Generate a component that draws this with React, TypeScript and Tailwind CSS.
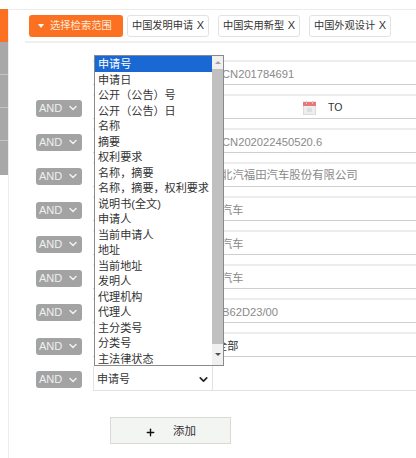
import React from 'react';
import { ChevronDown, Plus } from 'lucide-react';

const FONT = "font-['Liberation_Sans','Noto_Sans_CJK_SC',sans-serif]";

const options = [
  '申请号', '申请日', '公开（公告）号', '公开（公告）日', '名称', '摘要', '权利要求',
  '名称，摘要', '名称，摘要，权利要求', '说明书(全文)', '申请人', '当前申请人', '地址',
  '当前地址', '发明人', '代理机构', '代理人', '主分类号', '分类号', '主法律状态',
];

const rows = [
  { value: 'CN201784691', hasAnd: false, cls: '' },
  { value: '', hasAnd: true, date: true, cls: '' },
  { value: 'CN202022450520.6', hasAnd: true, cls: '' },
  { value: '北汽福田汽车股份有限公司', hasAnd: true, cls: 'ml-[-1px] text-[11.4px]' },
  { value: '汽车', hasAnd: true, cls: 'ml-[-1px]' },
  { value: '汽车', hasAnd: true, cls: 'ml-[-1px]' },
  { value: '汽车', hasAnd: true, cls: 'ml-[-1px]' },
  { value: 'B62D23/00', hasAnd: true, cls: '' },
  { value: '全部', hasAnd: true, cls: 'ml-[-6px] text-[#333]' },
];

const Chip = ({ label }: { label: string }) => (
  <div className="flex h-[22px] w-[82px] items-center justify-between rounded-[3px] border border-[#e2e2e2] bg-white px-[4px] text-[10.2px] text-[#333]">
    <span>{label}</span>
    <span className="text-[11px]">X</span>
  </div>
);

const AndPill = () => (
  <div className="flex h-[17px] w-[46px] items-center justify-between rounded-[3px] bg-[#a3a3a3] pl-[3px] pr-[3px] text-[11px] text-[#f0f0f0]">
    <span>AND</span>
    <ChevronDown size={12} strokeWidth={3} />
  </div>
);

const CalendarIcon = () => (
  <svg width="13" height="14" viewBox="0 0 13 14">
    <rect x="0.5" y="1" width="12" height="12.5" fill="#eeeeee" stroke="#dcdcdc" />
    <rect x="0" y="1" width="13" height="4" fill="#e8777a" />
    <rect x="3" y="0" width="1" height="3" fill="#c9c9c9" />
    <rect x="9" y="0" width="1" height="3" fill="#c9c9c9" />
    <rect x="4" y="7" width="5" height="4" fill="#dedede" />
  </svg>
);

const Dropdown = () => (
  <div className="absolute left-[94px] top-[55px] flex h-[311px] w-[130px] overflow-hidden border border-[#8a8a8a] bg-white text-[11.1px] text-[#333]">
    <div className="flex-1 overflow-hidden">
      {options.map((opt, i) => (
        <div
          key={opt}
          className={`h-[15.5px] whitespace-nowrap pl-[3px] leading-[17px] ${i === 0 ? 'bg-[#1a68d4] text-white' : ''}`}
        >
          {opt}
        </div>
      ))}
    </div>
    <div className="flex w-[11px] flex-col bg-[#f0f0f0]">
      <div className="flex h-[13px] items-center justify-center">
        <div className="h-0 w-0 border-x-[3px] border-b-[3px] border-x-transparent border-b-[#a0a0a0]" />
      </div>
      <div className="h-[275px] bg-[#c0c0c0]" />
      <div className="flex flex-1 items-center justify-center">
        <div className="h-0 w-0 border-x-[3px] border-t-[3px] border-x-transparent border-t-[#505050]" />
      </div>
    </div>
  </div>
);

export default function App() {
  return (
    <div className={`relative h-[458px] w-[416px] overflow-hidden bg-white ${FONT}`}>
      <div className="flex h-full pt-[9px]">
        {/* left rail */}
        <div className="flex w-[8px] shrink-0 flex-col">
          <div className="h-[33px] bg-[#fb7021]" />
          <div className="h-[33px] border-b border-[#c4c4c4] bg-[#a8a8a8]" />
          <div className="h-[33px] border-b border-[#c4c4c4] bg-[#a8a8a8]" />
          <div className="h-[33px] border-b border-[#c4c4c4] bg-[#a8a8a8]" />
          <div className="h-[34px] bg-[#a8a8a8]" />
        </div>

        {/* main panel */}
        <div className="flex-1 border-l border-t border-[#ececec]">
          <div className="ml-[16px] flex h-[33px] items-center gap-[9px] border-b-2 border-[#efefef] pl-[4px] pb-[1px] pt-[1px]">
            <div className="mr-[-5px] flex h-[22px] w-[94px] shrink-0 items-center rounded-[3px] bg-[#fb7021] pl-[9px] text-[10.3px] text-[#ffe9d8]">
              <div className="mr-[6px] h-0 w-0 border-x-[3px] border-t-[4px] border-x-transparent border-t-white" />
              <span>选择检索范围</span>
            </div>
            <Chip label="中国发明申请" />
            <Chip label="中国实用新型" />
            <Chip label="中国外观设计" />
          </div>

          <div className="flex flex-col gap-[9px] pt-[17px]">
            {rows.map((row, i) => (
              <div key={i} className="flex h-[25px] items-center">
                <div className="ml-[27px] w-[46px] shrink-0 pt-[3px]">{row.hasAnd && <AndPill />}</div>
                <div className="ml-[11px] flex h-[25px] flex-1 items-center border-b border-t-2 border-b-[#cfcfcf] border-t-[#ececec] pl-[129px] pt-[2px] text-[11.2px] text-[#8a8a8a]">
                  {row.date ? (
                    <div className="ml-[81px] flex items-center gap-[12px] text-[#333]">
                      <CalendarIcon />
                      <span className="text-[10.5px]">TO</span>
                    </div>
                  ) : (
                    <span className={row.cls}>{row.value}</span>
                  )}
                </div>
              </div>
            ))}

            {/* last row, closed select */}
            <div className="flex h-[25px] items-center">
              <div className="ml-[27px] w-[46px] shrink-0 pt-[2px]">
                <AndPill />
              </div>
              <div className="ml-[11px] flex h-[25px] flex-1 border-b border-b-[#e2e2e2]">
                <div className="flex w-[120px] items-center justify-between border-x border-[#e2e2e2] pl-[3px] pr-[2px] pt-[2px] text-[11px] text-[#333]">
                  <span>申请号</span>
                  <ChevronDown size={13} strokeWidth={3} className="text-[#222]" />
                </div>
              </div>
            </div>
          </div>

          <div className="ml-[101px] mt-[26px] flex h-[27px] w-[121px] items-center border border-[#dadad5] bg-[#f3f5f3] pl-[34px] pt-[3px] text-[11.5px] text-[#333]">
            <Plus size={11} strokeWidth={3} className="text-[#111]" />
            <span className="ml-[17px]">添加</span>
          </div>
        </div>
      </div>

      <Dropdown />
    </div>
  );
}
